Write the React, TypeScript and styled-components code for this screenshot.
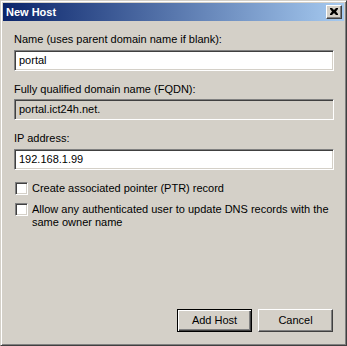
import React from "react";
import styled, { createGlobalStyle } from "styled-components";

const Global = createGlobalStyle`
  html, body { margin: 0; padding: 0; background: #d4d0c8; }
  body { font-family: Tahoma, "Liberation Sans", Arial, sans-serif; font-size: 11px; }
`;

const Window = styled.div`
  box-sizing: border-box;
  width: 347px;
  height: 346px;
  background: #d4d0c8;
  border-top: 1px solid #d4d0c8;
  border-left: 1px solid #d4d0c8;
  border-right: 1px solid #404040;
  border-bottom: 1px solid #404040;
  box-shadow: inset 1px 1px 0 #ffffff, inset -1px -1px 0 #808080;
  padding: 2px;
  display: flex;
  flex-direction: column;
`;

const TitleBar = styled.div`
  height: 18px;
  flex: none;
  background: linear-gradient(to right, #0a246a, #a6caf0);
  display: flex;
  align-items: center;
  justify-content: space-between;
  padding: 0 2px 0 3px;
`;

const Title = styled.span`
  color: #ffffff;
  font-family: "Liberation Sans", Arial, sans-serif;
  font-weight: bold;
  font-size: 11px;
  line-height: 13px;
`;

const CloseButton = styled.div`
  box-sizing: border-box;
  width: 16px;
  height: 14px;
  background: #d4d0c8;
  border-top: 1px solid #ffffff;
  border-left: 1px solid #ffffff;
  border-right: 1px solid #404040;
  border-bottom: 1px solid #404040;
  box-shadow: inset -1px -1px 0 #808080;
  display: flex;
  align-items: center;
  justify-content: center;
  padding: 0 1px 1px 0;
`;

const Content = styled.div`
  flex: 1;
  display: flex;
  flex-direction: column;
  padding: 12px 11px 11px 11px;
  font-family: "Liberation Sans", Arial, sans-serif;
  font-size: 11px;
  color: #000;
`;

const Label = styled.div<{ $top?: number }>`
  line-height: 13px;
  height: 13px;
  margin-top: ${(p) => p.$top ?? 0}px;
  white-space: nowrap;
`;

const Field = styled.div<{ $readOnly?: boolean; $top: number }>`
  box-sizing: border-box;
  width: 320px;
  height: 21px;
  margin-top: ${(p) => p.$top}px;
  background: ${(p) => (p.$readOnly ? "#d4d0c8" : "#ffffff")};
  border-top: 1px solid #808080;
  border-left: 1px solid #808080;
  border-right: 1px solid #ffffff;
  border-bottom: 1px solid #ffffff;
  box-shadow: inset 1px 1px 0 #404040, inset -1px -1px 0 #d4d0c8;
  padding: 0 0 0 4px;
  display: flex;
  align-items: center;
  line-height: 13px;
  white-space: nowrap;
`;

const CheckRow = styled.div<{ $top: number }>`
  display: flex;
  align-items: flex-start;
  gap: 4px;
  margin-top: ${(p) => p.$top}px;
  padding-left: 1px;
`;

const Box = styled.div`
  box-sizing: border-box;
  flex: none;
  width: 13px;
  height: 13px;
  background: #ffffff;
  border-top: 1px solid #808080;
  border-left: 1px solid #808080;
  border-right: 1px solid #ffffff;
  border-bottom: 1px solid #ffffff;
  box-shadow: inset 1px 1px 0 #404040, inset -1px -1px 0 #d4d0c8;
`;

const CheckText = styled.div`
  line-height: 13px;
  width: 300px;
`;

const ButtonRow = styled.div`
  margin-top: auto;
  display: flex;
  justify-content: flex-end;
  gap: 6px;
`;

const Button = styled.div<{ $default?: boolean }>`
  box-sizing: border-box;
  width: 75px;
  height: 23px;
  background: #d4d0c8;
  display: flex;
  align-items: center;
  justify-content: center;
  line-height: 13px;
  ${(p) =>
    p.$default
      ? `border: 1px solid #000000;
         box-shadow: inset 1px 1px 0 #ffffff, inset -1px -1px 0 #404040, inset -2px -2px 0 #808080;`
      : `border-top: 1px solid #ffffff;
         border-left: 1px solid #ffffff;
         border-right: 1px solid #404040;
         border-bottom: 1px solid #404040;
         box-shadow: inset -1px -1px 0 #808080;`}
`;

export default function App() {
  return (
    <>
      <Global />
      <Window>
        <TitleBar>
          <Title>New Host</Title>
          <CloseButton>
            <svg width="8" height="7" viewBox="0 0 8 7">
              <path
                d="M0 0h2l2 2 2-2h2v1L6 3.5 8 6v1H6L4 5 2 7H0V6l2-2.5L0 1z"
                fill="#000"
              />
            </svg>
          </CloseButton>
        </TitleBar>
        <Content>
          <Label>Name (uses parent domain name if blank):</Label>
          <Field $top={4}>portal</Field>
          <Label $top={12}>Fully qualified domain name (FQDN):</Label>
          <Field $top={3} $readOnly>
            portal.ict24h.net.
          </Field>
          <Label $top={12}>IP address:</Label>
          <Field $top={4}>192.168.1.99</Field>
          <CheckRow $top={12}>
            <Box />
            <CheckText>Create associated pointer (PTR) record</CheckText>
          </CheckRow>
          <CheckRow $top={8}>
            <Box />
            <CheckText>
              Allow any authenticated user to update DNS records with the same
              owner name
            </CheckText>
          </CheckRow>
          <ButtonRow>
            <Button $default>Add Host</Button>
            <Button>Cancel</Button>
          </ButtonRow>
        </Content>
      </Window>
    </>
  );
}
